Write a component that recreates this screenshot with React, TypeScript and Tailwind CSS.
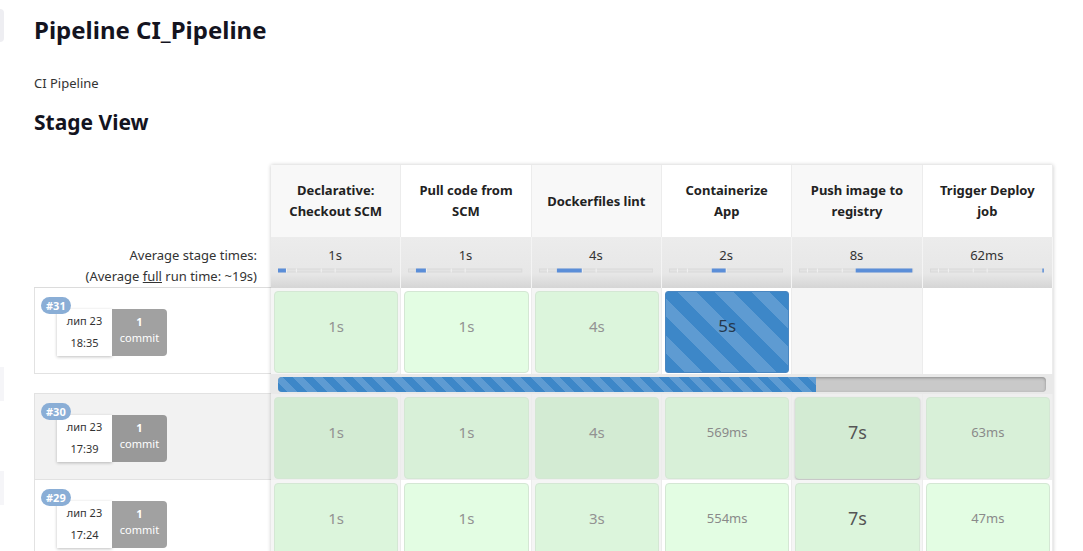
import React from 'react'

type Cell =
  | { kind: 'ok'; text: string; size: 'sm' | 'md' | 'lg'; lift?: boolean }
  | { kind: 'running'; text: string }
  | { kind: 'empty' }

interface Build {
  id: number
  date: string
  time: string
  hover?: boolean
  cells: Cell[]
  progress?: number
}

const stages: { lines: string[]; avg: string; from: number; width: number }[] = [
  { lines: ['Declarative:', 'Checkout SCM'], avg: '1s', from: 0, width: 8 },
  { lines: ['Pull code from', 'SCM'], avg: '1s', from: 8, width: 10 },
  { lines: ['Dockerfiles lint'], avg: '4s', from: 18, width: 25 },
  { lines: ['Containerize', 'App'], avg: '2s', from: 43, width: 14 },
  { lines: ['Push image to', 'registry'], avg: '8s', from: 57, width: 57 },
  { lines: ['Trigger Deploy', 'job'], avg: '62ms', from: 113, width: 1.5 },
]

const builds: Build[] = [
  {
    id: 31,
    date: 'лип 23',
    time: '18:35',
    progress: 70,
    cells: [
      { kind: 'ok', text: '1s', size: 'md' },
      { kind: 'ok', text: '1s', size: 'md' },
      { kind: 'ok', text: '4s', size: 'md' },
      { kind: 'running', text: '5s' },
      { kind: 'empty' },
      { kind: 'empty' },
    ],
  },
  {
    id: 30,
    date: 'лип 23',
    time: '17:39',
    hover: true,
    cells: [
      { kind: 'ok', text: '1s', size: 'md' },
      { kind: 'ok', text: '1s', size: 'md' },
      { kind: 'ok', text: '4s', size: 'md' },
      { kind: 'ok', text: '569ms', size: 'sm' },
      { kind: 'ok', text: '7s', size: 'lg', lift: true },
      { kind: 'ok', text: '63ms', size: 'sm' },
    ],
  },
  {
    id: 29,
    date: 'лип 23',
    time: '17:24',
    cells: [
      { kind: 'ok', text: '1s', size: 'md' },
      { kind: 'ok', text: '1s', size: 'md' },
      { kind: 'ok', text: '3s', size: 'md' },
      { kind: 'ok', text: '554ms', size: 'sm' },
      { kind: 'ok', text: '7s', size: 'lg' },
      { kind: 'ok', text: '47ms', size: 'sm' },
    ],
  },
]

const MiniBar = ({ from, width }: { from: number; width: number }) => (
  <svg width="115" height="5" viewBox="0 0 115 5">
    <rect x="0" y="0.5" width="115" height="4" fill="#d9d9d9" />
    <rect x="1" y="1.5" width="113" height="2" fill="#e3e3e3" />
    {[8, 18, 43, 57].map(t => (
      <rect key={t} x={t} y="0.5" width="1" height="4" fill="#f2f2f2" />
    ))}
    <rect x={from} y="0.5" width={width} height="4" fill="#5b8ed8" />
  </svg>
)

function StageBox({ cell, col, hover }: { cell: Cell; col: number; hover?: boolean }) {
  const odd = col % 2 === 0
  if (cell.kind === 'empty') return null
  if (cell.kind === 'running') {
    return (
      <div className="h-full rounded-[3px] border border-[#4a86c0] bg-[repeating-linear-gradient(45deg,#3d87c8_0px,#3d87c8_13px,#5e9bd2_13px,#5e9bd2_26px)] pt-[24px] text-center text-[17px] leading-[20px] text-[#24384d]">
        {cell.text}
      </div>
    )
  }
  const bg = hover
    ? odd ? 'bg-[#d3ebd3]' : 'bg-[#d8f0d8]'
    : odd ? 'bg-[#dcf5dc]' : 'bg-[#e3fde3]'
  const size =
    cell.size === 'lg'
      ? 'text-[18px] text-[#555]'
      : cell.size === 'sm'
        ? 'text-[13px] text-[#8a8a8a]'
        : 'text-[15px] text-[#929292]'
  return (
    <div
      className={`h-full rounded-[4px] border border-[#d4e7d4] pt-[24px] text-center leading-[20px] ${bg} ${size} ${
        cell.lift ? 'shadow-[0_1px_2px_rgba(0,0,0,0.22)]' : ''
      }`}
    >
      {cell.text}
    </div>
  )
}

function BuildLabel({ build }: { build: Build }) {
  return (
    <div className="relative pl-[22px] pt-[21px]">
      <span className="absolute left-[6px] top-[9px] z-10 rounded-full bg-[#8aaed6] px-[5px] text-[11px] font-bold leading-[17px] text-white">
        #{build.id}
      </span>
      <div className="flex">
        <div className="h-[47px] w-[55px] bg-white pt-[1px] text-center text-[11px] leading-[22px] text-[#333] shadow-[0_1px_3px_rgba(0,0,0,0.25)]">
          <div>{build.date}</div>
          <div>{build.time}</div>
        </div>
        <div
          className={`h-[47px] w-[55px] rounded-r-[4px] pt-[5px] text-center text-[11px] leading-[16px] text-white ${
            build.hover ? 'bg-[#999]' : 'bg-[#a1a1a1]'
          }`}
        >
          <div className="font-bold">1</div>
          <div>commit</div>
        </div>
      </div>
    </div>
  )
}

export default function App() {
  return (
    <div className="flex min-h-screen bg-white font-['Noto_Sans',sans-serif] text-[#333]">
      {/* sidebar edge */}
      <aside className="flex w-[4px] shrink-0 flex-col pt-[9px]">
        <div className="h-[33px] rounded-r-[6px] bg-[#eeeef2]" />
        <div className="mt-[325px] h-[34px] bg-[#f5f5f8]" />
        <div className="mt-[70px] h-[34px] bg-[#f5f5f8]" />
      </aside>

      <main className="pl-[30px] pt-[15px]">
        <h1 className="text-[24px] font-bold leading-[30px] text-[#14141f]">Pipeline CI_Pipeline</h1>
        <p className="mt-[29px] text-[13px] leading-[18px] text-[#333]">CI Pipeline</p>
        <h2 className="mt-[16px] text-[21px] font-bold leading-[28px] text-[#14141f]">Stage View</h2>

        <div className="mt-[29px] flex">
          {/* left column */}
          <div className="w-[237px] shrink-0">
            <div className="h-[72px]" />
            <div className="h-[51px] border-b border-[#dcdcdc] pr-[14px] pt-[8px] text-right text-[13px] leading-[21px] text-[#333]">
              <div>Average stage times:</div>
              <div>
                (Average <span className="underline">full</span> run time: ~19s)
              </div>
            </div>
            {builds.map(b => (
              <React.Fragment key={b.id}>
                <div
                  className={`h-[86px] border-b border-l border-[#e2e2e2] ${b.hover ? 'bg-[#f2f2f2]' : 'bg-white'}`}
                >
                  <BuildLabel build={b} />
                </div>
                {b.progress !== undefined && <div className="h-[20px] border-b border-[#e2e2e2]" />}
              </React.Fragment>
            ))}
          </div>

          {/* stage grid */}
          <div className="w-[782px] shrink-0 shadow-[0_0_4px_rgba(0,0,0,0.22)]">
            <div className="grid h-[72px] grid-cols-6">
              {stages.map((s, i) => (
                <div
                  key={i}
                  className={`flex flex-col items-center justify-center border-r border-[#ececec] text-center text-[13px] font-bold leading-[21px] text-[#222] ${
                    i % 2 === 0 ? 'bg-[#f8f8f8]' : 'bg-white'
                  }`}
                >
                  {s.lines.map(l => (
                    <div key={l}>{l}</div>
                  ))}
                </div>
              ))}
            </div>

            <div className="grid h-[51px] grid-cols-6">
              {stages.map((s, i) => (
                <div
                  key={i}
                  className="border-r border-[#f4f4f4] bg-[linear-gradient(to_bottom,#ececec_0%,#e7e7e7_72%,#d5d5d5_100%)] pl-[7px] pr-[8px] pt-[8px]"
                >
                  <div className="text-center text-[13px] leading-[20px] text-[#333]">{s.avg}</div>
                  <div className="mt-[3px] flex">
                    <MiniBar from={s.from} width={s.width} />
                  </div>
                </div>
              ))}
            </div>

            {builds.map(b => (
              <React.Fragment key={b.id}>
                <div className="grid h-[86px] grid-cols-6">
                  {b.cells.map((c, i) => (
                    <div
                      key={i}
                      className={`border-r border-[#ececec] pb-[1px] pl-[3px] pr-[2px] pt-[3px] ${
                        b.hover ? 'bg-[#efefef]' : i % 2 === 0 ? 'bg-[#f5f5f5]' : 'bg-white'
                      }`}
                    >
                      <StageBox cell={c} col={i} hover={b.hover} />
                    </div>
                  ))}
                </div>
                {b.progress !== undefined && (
                  <div className="h-[20px] bg-[#e9e9e9] px-[7px] pt-[3px]">
                    <div className="flex h-[15px] overflow-hidden rounded-[4px] bg-[#c9c9c9] shadow-[inset_0_1px_3px_rgba(0,0,0,0.3)]">
                      <div
                        className="h-full bg-[repeating-linear-gradient(45deg,#3d87c8_0px,#3d87c8_7px,#5e9bd2_7px,#5e9bd2_14px)]"
                        style={{ width: `${b.progress}%` }}
                      />
                    </div>
                  </div>
                )}
              </React.Fragment>
            ))}
          </div>
        </div>
      </main>
    </div>
  )
}
